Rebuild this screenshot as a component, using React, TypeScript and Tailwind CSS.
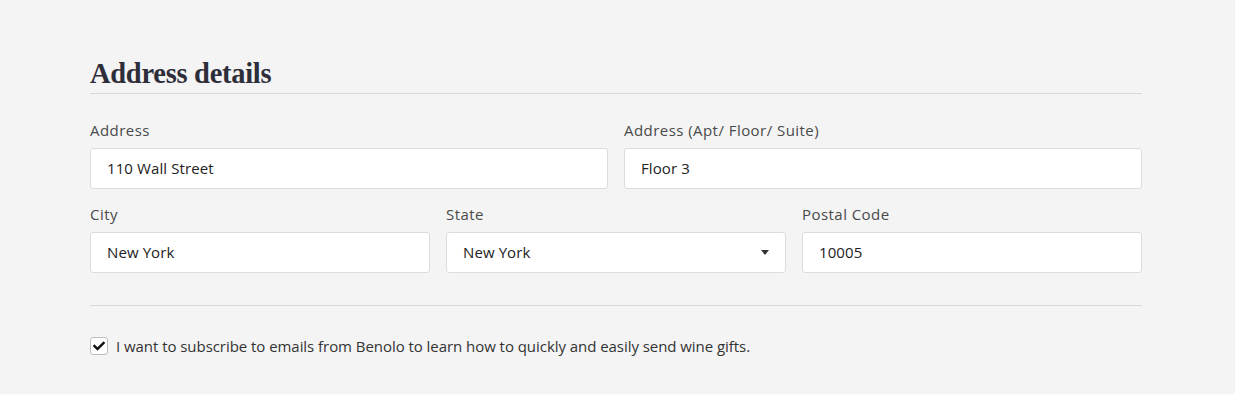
import { FaCheck } from "react-icons/fa";

const sans = { fontFamily: '"Open Sans", sans-serif' };

function Field({ label, value, select }: { label: string; value: string; select?: boolean }) {
  return (
    <div className="flex flex-col">
      <label className="mb-2 h-5 text-[15px] leading-5 tracking-[0.45px] text-[#4a4a4a]">{label}</label>
      <div className="flex h-[41px] items-center justify-between rounded-[3px] border border-[#dcdcdc] bg-white pl-4 pr-4 text-[15px] tracking-[0.1px] text-[#222]">
        <span>{value}</span>
        {select && (
          <svg width="8" height="5" viewBox="0 0 8 5">
            <path d="M0 0h8L4 5z" fill="#333" />
          </svg>
        )}
      </div>
    </div>
  );
}

export default function App() {
  return (
    <div className="min-h-[394px] w-full bg-[#f4f4f4]" style={sans}>
      <div className="w-[1052px] pt-[57px]" style={{ marginLeft: 90 }}>
        {/* Heading */}
        <h2
          className="border-b border-[#d9d9d9] pb-[3px] text-[28.5px] font-bold leading-[33px] tracking-[-0.01em] text-[#2e2e3a]"
          style={{ fontFamily: '"Liberation Serif", serif' }}
        >
          Address details
        </h2>

        <div className="mt-[26px] grid grid-cols-2 gap-x-4">
          <Field label="Address" value="110 Wall Street" />
          <Field label="Address (Apt/ Floor/ Suite)" value="Floor 3" />
        </div>

        <div className="mt-[15px] grid grid-cols-3 gap-x-4">
          <Field label="City" value="New York" />
          <Field label="State" value="New York" select />
          <Field label="Postal Code" value="10005" />
        </div>

        <div className="mt-[32px] border-t border-[#d9d9d9]" />

        {/* Subscribe */}
        <label className="mt-[30px] flex items-center gap-2 text-[15px] leading-5 tracking-[-0.05px] text-[#333]">
          <span className="flex h-[18px] w-[18px] items-center justify-center rounded-[3px] border border-[#bdbdbd] bg-white">
            <FaCheck size={12} className="text-[#111]" />
          </span>
          I want to subscribe to emails from Benolo to learn how to quickly and easily send wine gifts.
        </label>
      </div>
    </div>
  );
}
